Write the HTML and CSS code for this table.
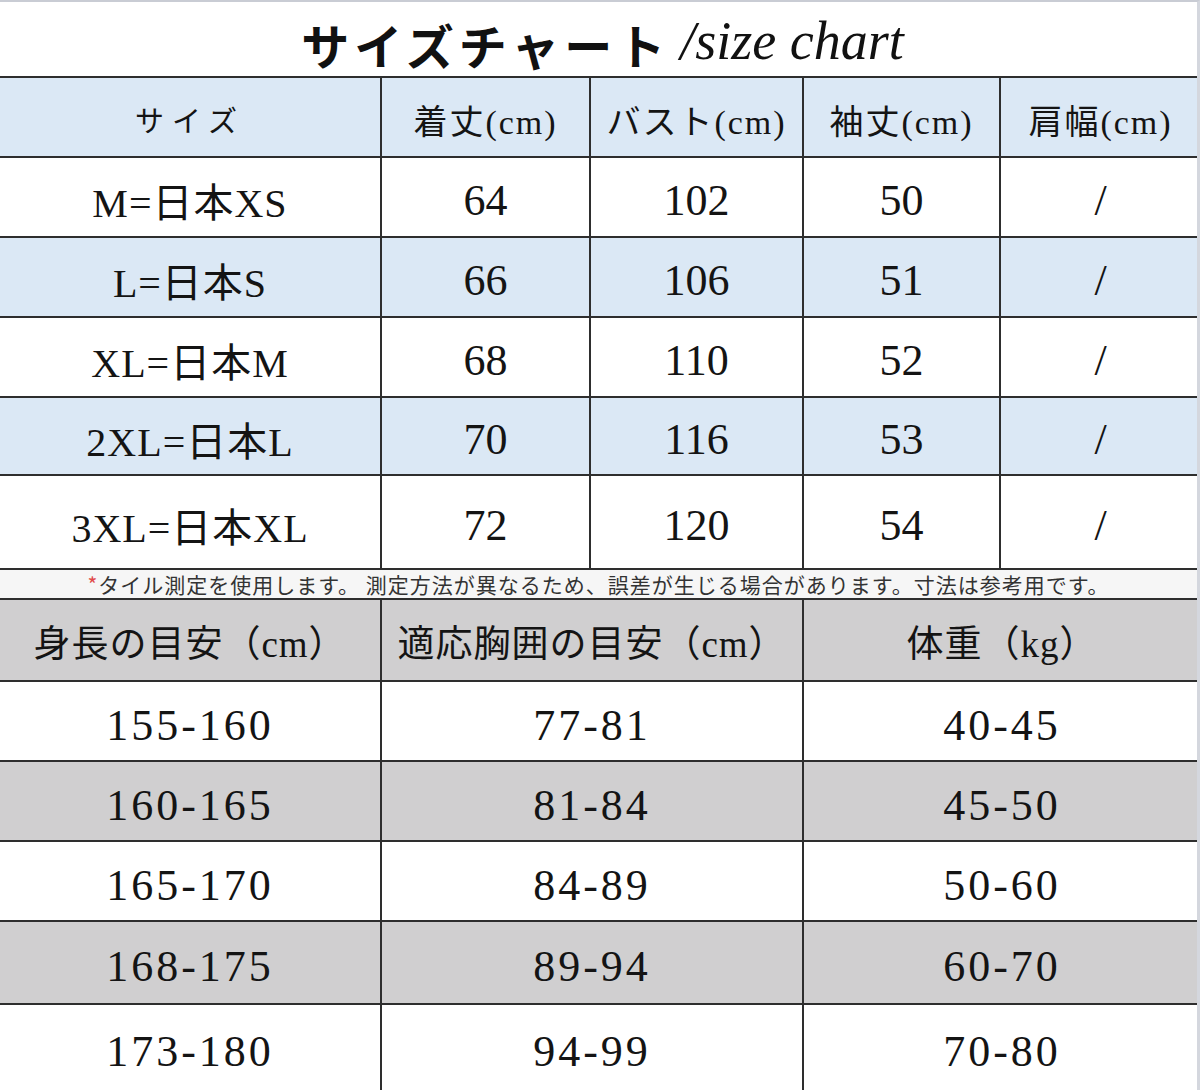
FILE: index.html
```html
<!DOCTYPE html>
<html lang="ja">
<head>
<meta charset="utf-8">
<link rel="stylesheet" href="styles.css">
</head>
<body>
<div class="sheet">
  <div class="title"><span class="jp">サイズチャート</span><span class="en">/size chart</span></div>
  <table class="t1">
    <colgroup><col class="c1"><col class="c2"><col class="c3"><col class="c4"><col class="c5"></colgroup>
    <tr class="head"><td class="kana">サイズ</td><td>着丈(cm)</td><td>バスト(cm)</td><td>袖丈(cm)</td><td>肩幅(cm)</td></tr>
    <tr class="r w"><td class="sz">M=日本XS</td><td>64</td><td>102</td><td>50</td><td>/</td></tr>
    <tr class="r b"><td class="sz">L=日本S</td><td>66</td><td>106</td><td>51</td><td>/</td></tr>
    <tr class="r w"><td class="sz">XL=日本M</td><td>68</td><td>110</td><td>52</td><td>/</td></tr>
    <tr class="r b h78"><td class="sz">2XL=日本L</td><td>70</td><td>116</td><td>53</td><td>/</td></tr>
    <tr class="r w h93"><td class="sz">3XL=日本XL</td><td>72</td><td>120</td><td>54</td><td>/</td></tr>
  </table>
  <div class="note"><span class="ast">*</span>タイル測定を使用します。 測定方法が異なるため、誤差が生じる場合があります。寸法は参考用です。</div>
  <table class="t2">
    <colgroup><col class="d1"><col class="d2"><col class="d3"></colgroup>
    <tr class="head2"><td>身長の目安（cm）</td><td>適応胸囲の目安（cm）</td><td>体重（kg）</td></tr>
    <tr class="s w"><td>155-160</td><td>77-81</td><td>40-45</td></tr>
    <tr class="s g"><td>160-165</td><td>81-84</td><td>45-50</td></tr>
    <tr class="s w"><td>165-170</td><td>84-89</td><td>50-60</td></tr>
    <tr class="s g h83"><td>168-175</td><td>89-94</td><td>60-70</td></tr>
    <tr class="s w h85"><td>173-180</td><td>94-99</td><td>70-80</td></tr>
  </table>
</div>
</body>
</html>
```

FILE: styles.css
```css
* { box-sizing: border-box; }
html, body { margin: 0; padding: 0; background: #fff; }
.sheet {
  width: 1200px;
  height: 1090px;
  overflow: hidden;
  background: #fff;
  border-top: 2px solid #c9ccd4;
  border-right: 3px solid #d4d7de;
}
.title {
  height: 74px;
  display: flex;
  align-items: flex-end;
  justify-content: center;
  padding-bottom: 8px;
  padding-left: 8px;
  color: #111;
  white-space: nowrap;
}
.title .jp {
  font-family: "Noto Sans CJK JP", sans-serif;
  font-weight: 700;
  font-size: 48px;
  letter-spacing: 5px;
  line-height: 1;
  margin-right: 10px;
}
.title .en {
  font-family: "Liberation Serif", serif;
  font-style: italic;
  font-size: 54px;
  line-height: 1;
}
table {
  width: 1200px;
  border-collapse: collapse;
  table-layout: fixed;
}
td {
  border: 2px solid #2e2e2e;
  text-align: center;
  vertical-align: middle;
  padding: 0;
  color: #141414;
  font-family: "Liberation Serif", "Noto Sans CJK JP", serif;
  white-space: nowrap;
}
tr td:first-child { border-left: none; }
tr td:last-child { border-right: none; }
.c1 { width: 381px; }
.c2 { width: 209px; }
.c3 { width: 213px; }
.c4 { width: 197px; }
.c5 { width: 200px; }
.d1 { width: 381px; }
.d2 { width: 422px; }
.d3 { width: 397px; }
.head td {
  height: 80px;
  background: #dbe8f5;
  font-size: 34px;
  letter-spacing: 2px;
  padding-top: 4px;
}
.head td.kana { font-size: 29px; letter-spacing: 8px; }
.r td { height: 80px; font-size: 44px; padding-top: 6px; }
.r td.sz { font-size: 40px; letter-spacing: 1px; }
.r.h78 td { height: 78px; }
.r.h93 td { height: 93px; }
.r.b td { background: #dbe8f5; }
.r.w td { background: #fff; }
.t1 tr:last-child td { border-bottom: none; }
.note {
  height: 32px;
  border-top: 2px solid #2e2e2e;
  border-bottom: 2px solid #2e2e2e;
  background: #f6f6f6;
  text-align: center;
  font-family: "Noto Sans CJK JP", sans-serif;
  font-size: 21px;
  letter-spacing: 1px;
  line-height: 28px;
  color: #333;
  white-space: nowrap;
}
.note .ast { color: #e04a4a; }
.t2 tr:first-child td { border-top: none; }
.head2 td {
  height: 81px;
  background: #d0cfd0;
  font-size: 37px;
  letter-spacing: 1px;
  padding-top: 2px;
}
.s td { height: 80px; font-size: 44px; letter-spacing: 3px; padding-top: 8px; }
.s.h83 td { height: 83px; }
.s.h85 td { height: 86px; }
.s.g td { background: #d0cfd0; }
.s.w td { background: #fff; }
.t2 tr:last-child td { border-bottom: none; }
```
